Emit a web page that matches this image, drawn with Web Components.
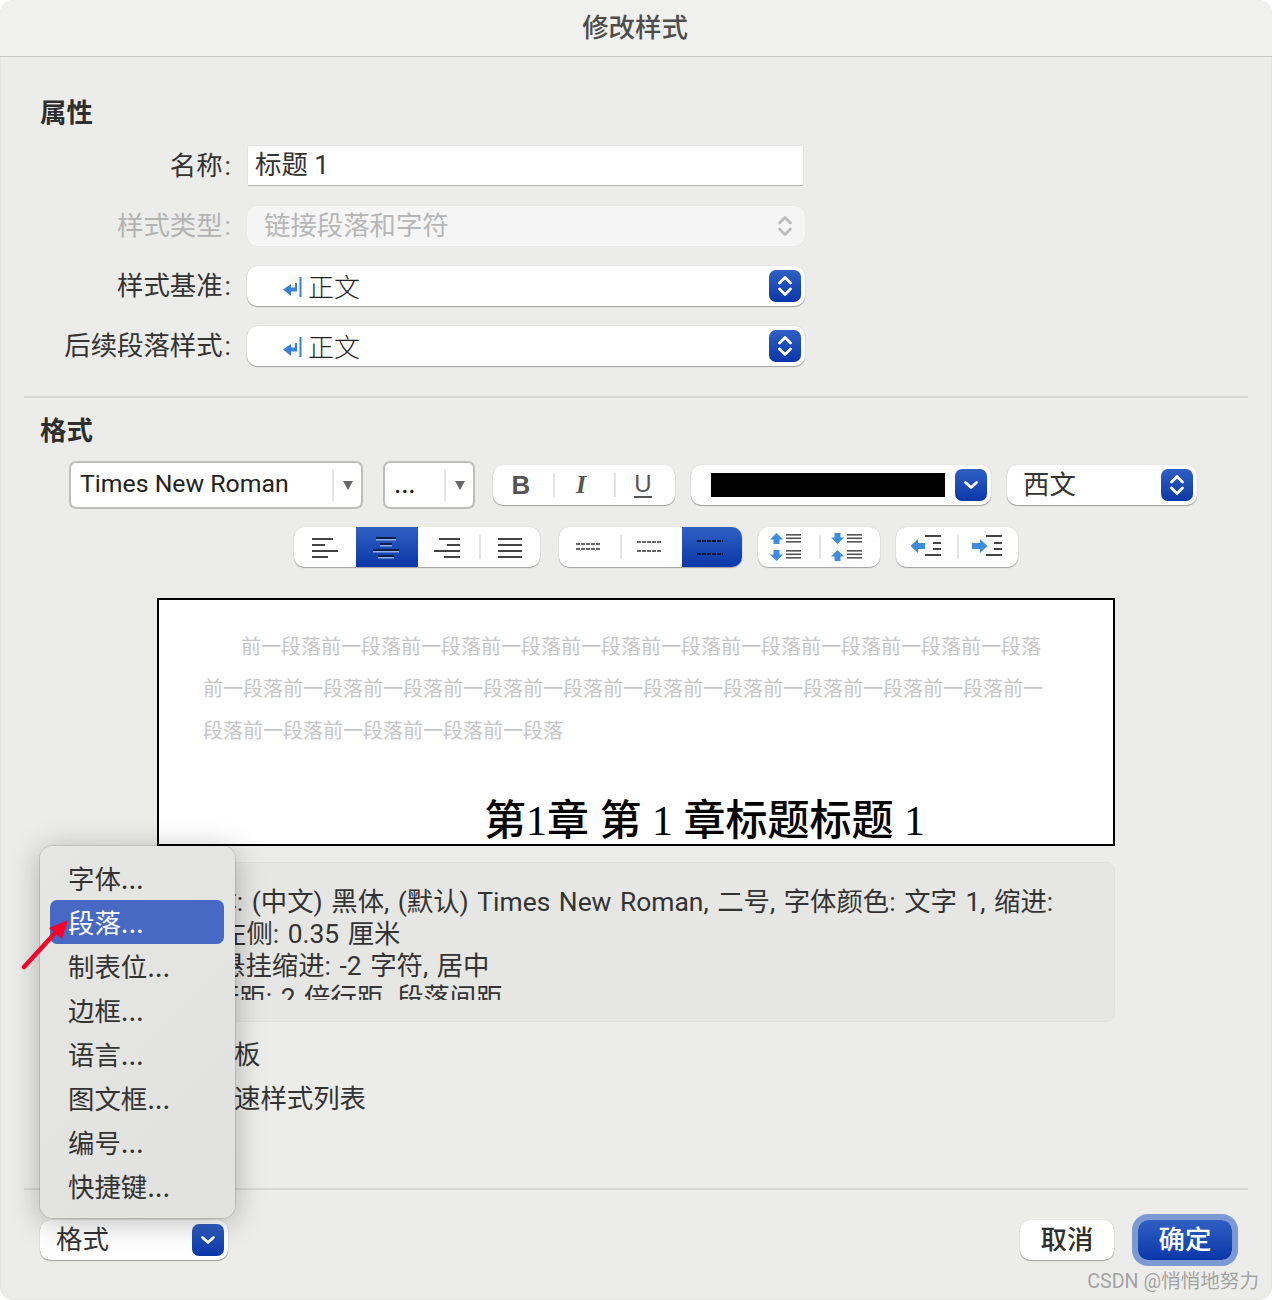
<!DOCTYPE html>
<html lang="zh-CN">
<head>
<meta charset="utf-8">
<title>修改样式</title>
<style>
  html, body { margin: 0; background: #fff; }
  body {
    font: 26.4px/32px Roboto, "Noto Sans CJK SC", sans-serif;
    color: #333;
  }
</style>
</head>
<body>

<dialog-window heading="修改样式">
  <section-heading>属性</section-heading>
  <form-rows>
    <form-row label="名称:"><text-field>标题 1</text-field></form-row>
    <form-row label="样式类型:" disabled><popup-field arrows="updown" disabled>链接段落和字符</popup-field></form-row>
    <form-row label="样式基准:"><popup-field arrows="updown"><style-name>正文</style-name></popup-field></form-row>
    <form-row label="后续段落样式:"><popup-field arrows="updown"><style-name>正文</style-name></popup-field></form-row>
  </form-rows>
  <rule-line style="margin-top:30px"></rule-line>
  <section-heading style="margin-top:17px">格式</section-heading>

  <tool-row style="margin-top:14px;height:48px;padding-left:45px">
    <combo-box style="width:294px">Times New Roman</combo-box>
    <combo-box style="width:92px;margin-left:20px;font-family:Inter,sans-serif">...</combo-box>
    <tool-group style="margin-left:18px">
      <tool-seg w="60"><b style="font:bold 26px 'Liberation Sans',sans-serif;color:#555;padding-right:4px">B</b></tool-seg>
      <tool-seg w="61" divider><b style="font:italic bold 26px 'Liberation Serif',serif;color:#555;padding-right:5px">I</b></tool-seg>
      <tool-seg w="61" divider><span style="font:24px 'Liberation Sans',sans-serif;color:#555;border-bottom:2px solid #555;line-height:24px;margin-right:3px">U</span></tool-seg>
    </tool-group>
    <popup-field arrows="down" style="width:300px;margin-left:16px;padding-left:20px;box-sizing:border-box"><color-swatch></color-swatch></popup-field>
    <popup-field arrows="updown" style="width:190px;margin-left:16px;padding-left:16px;box-sizing:border-box">西文</popup-field>
  </tool-row>

  <tool-row style="margin-top:18px;height:40px;padding-left:270px">
    <tool-group>
      <tool-seg w="62"><line-icon kind="left"></line-icon></tool-seg>
      <tool-seg w="62" selected><line-icon kind="center" style="margin-right:2px"></line-icon></tool-seg>
      <tool-seg w="61"><line-icon kind="right" style="margin-right:4px"></line-icon></tool-seg>
      <tool-seg w="61" divider><line-icon kind="justify"></line-icon></tool-seg>
    </tool-group>
    <tool-group style="margin-left:19px">
      <tool-seg w="61"><line-icon kind="single" style="margin-right:4px"></line-icon></tool-seg>
      <tool-seg w="62" divider><line-icon kind="half" style="margin-right:4px"></line-icon></tool-seg>
      <tool-seg w="60" selected><line-icon kind="double" style="margin-right:4px"></line-icon></tool-seg>
    </tool-group>
    <tool-group style="margin-left:16px">
      <tool-seg w="61"><line-icon kind="space-out" style="margin-right:5px"></line-icon></tool-seg>
      <tool-seg w="61" divider><line-icon kind="space-in" style="margin-right:5px"></line-icon></tool-seg>
    </tool-group>
    <tool-group style="margin-left:16px">
      <tool-seg w="61"><line-icon kind="outdent"></line-icon></tool-seg>
      <tool-seg w="61" divider><line-icon kind="indent"></line-icon></tool-seg>
    </tool-group>
  </tool-row>

  <preview-box></preview-box>

  <summary-box>
    <div>字体: (中文) 黑体, (默认) Times New Roman, 二号, 字体颜色: 文字 1, 缩进:</div>
    <div style="padding-left:36px">左侧: 0.35 厘米</div>
    <div style="padding-left:35px">悬挂缩进: -2 字符, 居中</div>
    <div style="padding-left:29px">行距: 2 倍行距, 段落间距</div>
  </summary-box>

  <check-line style="margin-top:17px">板</check-line>
  <check-line style="margin-top:12px">速样式列表</check-line>

  <rule-line style="margin-top:73px"></rule-line>

  <dialog-footer>
    <popup-field slot="left" arrows="down" style="width:188px;padding-left:16px;box-sizing:border-box">格式</popup-field>
    <push-button slot="right">取消</push-button>
    <push-button slot="right" primary>确定</push-button>
  </dialog-footer>

  <popup-menu slot="overlay">
    <menu-row>字体...</menu-row>
    <menu-row selected>段落...</menu-row>
    <menu-row>制表位...</menu-row>
    <menu-row>边框...</menu-row>
    <menu-row>语言...</menu-row>
    <menu-row>图文框...</menu-row>
    <menu-row>编号...</menu-row>
    <menu-row>快捷键...</menu-row>
  </popup-menu>
  <red-arrow slot="overlay"></red-arrow>
  <water-mark slot="overlay">CSDN @悄悄地努力</water-mark>
</dialog-window>

<script>
class DialogWindow extends HTMLElement {
  constructor() {
    super();
    this.attachShadow({mode: 'open'});
    this.shadowRoot.innerHTML = /*html*/ `
      <style>
        :host {
          display: block;
          position: relative;
          width: 1272px;
          height: 1300px;
          overflow: hidden;
          box-sizing: border-box;
          background: #ecECEA;
          border-radius: 14px;
          box-shadow: inset 0 0 0 1px #e4e4e2;
        }
        #title {
          height: 56px;
          border-bottom: 1px solid #c9c9c7;
          background: #f0f0ef;
          border-radius: 14px 14px 0 0;
          text-align: center;
          line-height: 56px;
          font-weight: 500;
          color: #4d4d4d;
          padding-right: 2px;
        }
        #body { padding: 40px 24px 0; }
      </style>
      <div id="title"></div>
      <div id="body"><slot></slot></div>
      <slot name="overlay"></slot>
    `;
  }

  connectedCallback() {
    this.shadowRoot.getElementById('title').textContent = this.getAttribute('heading');
  }
}

class SectionHeading extends HTMLElement {
  constructor() {
    super();
    this.attachShadow({mode: 'open'});
    this.shadowRoot.innerHTML = `
      <style>
        :host { display: block; padding-left: 16px; font-weight: 700; color: #2e2e2e; }
      </style>
      <slot></slot>
    `;
  }
}

class FormRows extends HTMLElement {
  constructor() {
    super();
    this.attachShadow({mode: 'open'});
    this.shadowRoot.innerHTML = `
      <style>
        :host { display: flex; flex-direction: column; gap: 20px; margin-top: 17px; }
      </style>
      <slot></slot>
    `;
  }
}

class FormRow extends HTMLElement {
  constructor() {
    super();
    this.attachShadow({mode: 'open'});
    this.shadowRoot.innerHTML = `
      <style>
        :host { display: flex; align-items: center; height: 40px; }
        :host([disabled]) label { color: #b3b3b3; }
        label { width: 207px; text-align: right; margin-right: 16px; margin-top: -1px; white-space: nowrap; }
        span { margin-left: 2px; }
      </style>
      <label></label>
      <slot></slot>
    `;
  }

  connectedCallback() {
    const text = this.getAttribute('label');
    this.shadowRoot.querySelector('label').innerHTML = `${text.slice(0, -1)}<span>:</span>`;
  }
}

class TextField extends HTMLElement {
  constructor() {
    super();
    this.attachShadow({mode: 'open'});
    this.shadowRoot.innerHTML = `
      <style>
        :host {
          display: block;
          box-sizing: border-box;
          width: 555px;
          height: 39px;
          margin: -1px 0 0 1px;
          padding-left: 7px;
          background: #fff;
          line-height: 39px;
          box-shadow: 0 1px 0 #b5b5b3, 0 0 1px #bbb;
        }
      </style>
      <slot></slot>
    `;
  }
}

class PopupField extends HTMLElement {
  constructor() {
    super();
    this.attachShadow({mode: 'open'});
    this.shadowRoot.innerHTML = `
      <style>
        :host {
          display: flex;
          align-items: center;
          box-sizing: border-box;
          width: 558px;
          height: 40px;
          padding-left: 17px;
          background: #fff;
          border-radius: 10px;
          box-shadow: 0 1px 1px rgba(0,0,0,.32), 0 0 1px rgba(0,0,0,.22);
          white-space: nowrap;
        }
        :host([disabled]) { background: #f5f5f5; color: #b7b7b7; box-shadow: 0 0 1px rgba(0,0,0,.12); }
        #btn {
          display: flex;
          align-items: center;
          justify-content: center;
          width: 32px;
          height: 32px;
          margin-left: auto;
          margin-right: 4px;
          border-radius: 7px;
          background: linear-gradient(#3060c3, #0a37a8);
        }
        :host([disabled]) #btn { background: none; }
        :host([disabled]) path { stroke: #bcbcbc; }
        svg { display: block; }
      </style>
      <slot></slot>
      <div id="btn"></div>
    `;
  }

  connectedCallback() {
    const btn = this.shadowRoot.getElementById('btn');
    btn.innerHTML = this.getAttribute('arrows') === 'down'
      ? '<svg width="16" height="12" viewBox="0 0 16 12"><path d="M2.500 3.500 8 8.500l5.500-5" fill="none" stroke="#fff" stroke-width="2.800" stroke-linecap="round" stroke-linejoin="round"/></svg>'
      : '<svg width="16" height="24" viewBox="0 0 16 24"><path d="M2.500 9 8 3.500 13.500 9M2.500 15 8 20.500 13.500 15" fill="none" stroke="#fff" stroke-width="2.800" stroke-linecap="round" stroke-linejoin="round"/></svg>';
  }
}

class StyleName extends HTMLElement {
  constructor() {
    super();
    this.attachShadow({mode: 'open'});
    this.shadowRoot.innerHTML = `
      <style>
        :host { display: flex; align-items: center; margin-left: 19px; font-family: "Liberation Serif", "Noto Sans CJK SC", serif; font-size: 26px; font-weight: 300; color: #222; position: relative; top: 3px; }
        svg { margin-right: 6px; margin-top: -5px; }
      </style>
      <svg width="19" height="20" viewBox="0 0 19 20">
        <path d="M16.500 0h2v20h-2z" fill="#3a80d6"/>
        <path d="M0 12.500 8 7v3.500h4V6h2v8.500H8V19z" fill="#3a80d6"/>
      </svg>
      <slot></slot>
    `;
  }
}

class ComboBox extends HTMLElement {
  constructor() {
    super();
    this.attachShadow({mode: 'open'});
    this.shadowRoot.innerHTML = `
      <style>
        :host {
          display: flex;
          align-items: center;
          box-sizing: border-box;
          height: 48px;
          padding-left: 9px;
          background: #fff;
          border: 2px solid #bdbdbb;
          border-radius: 7px;
          color: #222;
          font-size: 24.800px;
          white-space: nowrap;
        }
        #text { margin-top: -3px; }
        #divider { width: 2px; height: 32px; background: #e6e6e6; margin-left: auto; }
        #arrow { width: 27px; display: flex; justify-content: center; }
        svg { display: block; }
      </style>
      <div id="text"><slot></slot></div>
      <div id="divider"></div>
      <div id="arrow"><svg width="10" height="9" viewBox="0 0 10 9"><path d="M0 0h10L5 9z" fill="#666"/></svg></div>
    `;
  }
}

class ToolRow extends HTMLElement {
  constructor() {
    super();
    this.attachShadow({mode: 'open'});
    this.shadowRoot.innerHTML = `
      <style>
        :host { display: flex; align-items: center; }
      </style>
      <slot></slot>
    `;
  }
}

class ToolGroup extends HTMLElement {
  constructor() {
    super();
    this.attachShadow({mode: 'open'});
    this.shadowRoot.innerHTML = `
      <style>
        :host {
          display: flex;
          height: 40px;
          background: #fff;
          border-radius: 10px;
          overflow: hidden;
          box-shadow: 0 1px 1px rgba(0,0,0,.3), 0 0 1px rgba(0,0,0,.2);
          flex: none;
        }
      </style>
      <slot></slot>
    `;
  }
}

class ToolSeg extends HTMLElement {
  constructor() {
    super();
    this.attachShadow({mode: 'open'});
    this.shadowRoot.innerHTML = `
      <style>
        :host {
          display: flex;
          align-items: center;
          justify-content: center;
          position: relative;
          height: 40px;
        }
        :host([selected]) { background: linear-gradient(#3060c3, #0a37a8); }
        :host([divider])::before {
          content: '';
          position: absolute;
          left: 0;
          top: 8px;
          bottom: 8px;
          width: 2px;
          background: #e4e4e4;
        }
      </style>
      <slot></slot>
    `;
  }

  connectedCallback() {
    this.style.width = `${this.getAttribute('w')}px`;
  }
}

class LineIcon extends HTMLElement {
  constructor() {
    super();
    this.attachShadow({mode: 'open'});
    this.shadowRoot.innerHTML = `
      <style>
        :host { display: block; line-height: 0; }
      </style>
      <svg width="34" height="28" viewBox="0 0 34 28"></svg>
    `;
  }

  connectedCallback() {
    const dark = '#444';
    const blue = '#3d8ce0';
    const bar = (x, y, w, c = dark, h = 2) => `<rect x="${x}" y="${y}" width="${w}" height="${h}" fill="${c}"/>`;
    const dashes = (x, y, w, c = '#666') => `<path d="M${x} ${y}h${w}" stroke="${c}" stroke-width="2" stroke-dasharray="4 1"/>`;
    const up = (x, y) => `<path d="M${x} ${y + 6.500}l6.500-6.500 6.500 6.500h-3.500v4.500h-6v-4.500z" fill="${blue}"/>`;
    const down = (x, y) => `<path d="M${x} ${y + 4.500}h3.500V${y}h6v${4.500}h3.500l-6.500 6.500z" fill="${blue}"/>`;
    const trio = (x, y) => bar(x, y, 15, '#555', 1.6) + bar(x, y + 3.500, 15, '#555', 1.6) + bar(x, y + 7, 15, '#555', 1.6);
    const selBar = (x, y, w) => bar(x, y, w, '#0f1f4a') + bar(x, y + 2, w, '#8fb0ea', 1.5);
    const indentLines = x => bar(x, 2, 16) + bar(x + 8, 9, 8) + bar(x + 8, 15, 8) + bar(x, 21, 16);
    const icons = {
      left: bar(4, 5, 21) + bar(4, 11, 13) + bar(4, 17, 26) + bar(4, 23, 16),
      center: selBar(7, 4, 20) + selBar(11, 10, 12) + selBar(4, 16, 26) + selBar(9, 22, 16),
      right: bar(9, 5, 21) + bar(17, 11, 13) + bar(4, 17, 26) + bar(14, 23, 16),
      justify: bar(5, 5, 24) + bar(5, 11, 24) + bar(5, 17, 24) + bar(5, 23, 24),
      single: dashes(5, 11, 25) + dashes(5, 16, 25),
      half: dashes(5, 9, 25) + dashes(5, 18, 25),
      double: dashes(4, 8, 26, '#111a3c') + dashes(4, 21, 26, '#111a3c'),
      'space-out': up(1, 0) + trio(17, 1) + down(1, 17) + trio(17, 17),
      'space-in': down(1, 0) + trio(17, 1) + up(1, 17) + trio(17, 17),
      outdent: `<path d="M0.500 13l7.500-7v4h7v6h-7v4z" fill="${blue}"/>` + indentLines(15),
      indent: `<path d="M1 10h8V6l7.500 7-7.500 7v-4H1z" fill="${blue}"/>` + indentLines(15)
    };
    this.shadowRoot.querySelector('svg').innerHTML = icons[this.getAttribute('kind')];
  }
}

class ColorSwatch extends HTMLElement {
  constructor() {
    super();
    this.attachShadow({mode: 'open'});
    this.shadowRoot.innerHTML = `
      <style>
        :host { display: block; width: 234px; height: 24px; background: #000; }
      </style>
    `;
  }
}

class RuleLine extends HTMLElement {
  constructor() {
    super();
    this.attachShadow({mode: 'open'});
    this.shadowRoot.innerHTML = `
      <style>
        :host { display: block; height: 2px; background: #d7d7d5; }
      </style>
    `;
  }
}

class PreviewBox extends HTMLElement {
  constructor() {
    super();
    this.attachShadow({mode: 'open'});
    this.shadowRoot.innerHTML = `
      <style>
        :host {
          display: block;
          box-sizing: border-box;
          width: 958px;
          height: 248px;
          margin: 31px 0 0 133px;
          padding: 26px 0 0 44px;
          background: #fff;
          border: 2px solid #000;
          overflow: hidden;
          font-family: "Liberation Serif", "Noto Sans CJK SC", serif;
        }
        #before {
          width: 842px;
          text-indent: 38px;
          font-size: 20px;
          line-height: 42px;
          color: #c6c6c6;
        }
        #title {
          margin: 48px 0 0 281px;
          font-size: 42px;
          line-height: 42px;
          font-weight: 500;
          color: #000;
          white-space: nowrap;
        }
      </style>
      <div id="before"></div>
      <div id="title">第1章 第 1 章标题标题 1</div>
    `;
  }

  connectedCallback() {
    this.shadowRoot.getElementById('before').textContent = '前一段落'.repeat(25);
  }
}

class SummaryBox extends HTMLElement {
  constructor() {
    super();
    this.attachShadow({mode: 'open'});
    this.shadowRoot.innerHTML = `
      <style>
        :host {
          display: block;
          box-sizing: border-box;
          width: 958px;
          height: 160px;
          margin: 16px 0 0 133px;
          padding: 23px 0 0 26px;
          background: #e6e6e4;
          border: 1px solid #e1e1df;
          border-radius: 8px;
          white-space: nowrap;
          word-spacing: 2px;
        }
        #clip { height: 114px; overflow: hidden; }
      </style>
      <div id="clip"><slot></slot></div>
    `;
  }
}

class CheckLine extends HTMLElement {
  constructor() {
    super();
    this.attachShadow({mode: 'open'});
    this.shadowRoot.innerHTML = `
      <style>
        :host { display: block; padding-left: 210px; }
      </style>
      <slot></slot>
    `;
  }
}

class DialogFooter extends HTMLElement {
  constructor() {
    super();
    this.attachShadow({mode: 'open'});
    this.shadowRoot.innerHTML = `
      <style>
        :host { display: flex; justify-content: space-between; margin-top: 30px; padding: 0 16px; }
        div { display: flex; gap: 24px; }
      </style>
      <slot name="left"></slot>
      <div><slot name="right"></slot></div>
    `;
  }
}

class PushButton extends HTMLElement {
  constructor() {
    super();
    this.attachShadow({mode: 'open'});
    this.shadowRoot.innerHTML = `
      <style>
        :host {
          display: flex;
          align-items: center;
          justify-content: center;
          width: 94px;
          height: 40px;
          background: #fff;
          border-radius: 10px;
          box-shadow: 0 1px 1px rgba(0,0,0,.3), 0 0 1px rgba(0,0,0,.2);
          font-weight: 500;
          color: #2e2e2e;
        }
        :host([primary]) {
          background: linear-gradient(#3060c3, #0a37a8);
          box-shadow: 0 0 0 6px #7d99d3;
          color: #fff;
        }
      </style>
      <slot></slot>
    `;
  }
}

class PopupMenu extends HTMLElement {
  constructor() {
    super();
    this.attachShadow({mode: 'open'});
    this.shadowRoot.innerHTML = `
      <style>
        :host {
          display: block;
          position: absolute;
          left: 40px;
          top: 846px;
          box-sizing: border-box;
          width: 195px;
          height: 372px;
          padding: 10px 11px 0 10px;
          background: linear-gradient(135deg, #e6e6e4, #e1e1df);
          border-radius: 13px;
          box-shadow: 0 0 0 1px rgba(0,0,0,.1), 0 4px 30px rgba(0,0,0,.28);
          font-family: Inter, "Noto Sans CJK SC", sans-serif;
        }
      </style>
      <slot></slot>
    `;
  }
}

class MenuRow extends HTMLElement {
  constructor() {
    super();
    this.attachShadow({mode: 'open'});
    this.shadowRoot.innerHTML = `
      <style>
        :host {
          display: block;
          height: 44px;
          padding-left: 18px;
          line-height: 46px;
          border-radius: 7px;
          color: #333;
        }
        :host([selected]) { background: #4769c4; color: #fff; }
      </style>
      <slot></slot>
    `;
  }
}

class RedArrow extends HTMLElement {
  constructor() {
    super();
    this.attachShadow({mode: 'open'});
    this.shadowRoot.innerHTML = `
      <style>
        :host { display: block; position: absolute; left: 20px; top: 915px; line-height: 0; }
      </style>
      <svg width="52" height="58" viewBox="0 0 52 58">
        <path d="M4 52 36 17" stroke="#f5002a" stroke-width="4.500" stroke-linecap="round" fill="none"/>
        <path d="M48 5 29 13 42 24z" fill="#f5002a"/>
      </svg>
    `;
  }
}

class WaterMark extends HTMLElement {
  constructor() {
    super();
    this.attachShadow({mode: 'open'});
    this.shadowRoot.innerHTML = `
      <style>
        :host {
          position: absolute;
          right: 13px;
          top: 1267px;
          font-size: 19.600px;
          line-height: 30px;
          color: rgba(120,120,120,.65);
          white-space: nowrap;
        }
      </style>
      <slot></slot>
    `;
  }
}

customElements.define('dialog-window', DialogWindow);
customElements.define('section-heading', SectionHeading);
customElements.define('form-rows', FormRows);
customElements.define('form-row', FormRow);
customElements.define('text-field', TextField);
customElements.define('popup-field', PopupField);
customElements.define('style-name', StyleName);
customElements.define('combo-box', ComboBox);
customElements.define('tool-row', ToolRow);
customElements.define('tool-group', ToolGroup);
customElements.define('tool-seg', ToolSeg);
customElements.define('line-icon', LineIcon);
customElements.define('color-swatch', ColorSwatch);
customElements.define('rule-line', RuleLine);
customElements.define('preview-box', PreviewBox);
customElements.define('summary-box', SummaryBox);
customElements.define('check-line', CheckLine);
customElements.define('dialog-footer', DialogFooter);
customElements.define('push-button', PushButton);
customElements.define('popup-menu', PopupMenu);
customElements.define('menu-row', MenuRow);
customElements.define('red-arrow', RedArrow);
customElements.define('water-mark', WaterMark);
</script>
</body>
</html>
